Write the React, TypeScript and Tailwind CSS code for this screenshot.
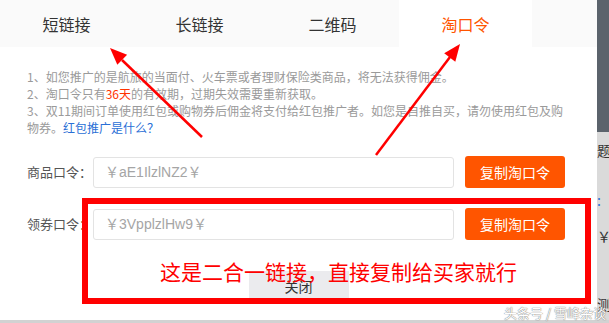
import React from 'react';

const tabs = ['短链接', '长链接', '二维码', '淘口令'];

function TokenRow({ label, value }: { label: string; value: string }) {
  return (
    <div className="flex items-center">
      <span className="w-[66px] text-[13px] text-[#555]">{label}</span>
      <div className="flex h-[31px] w-[361px] items-center rounded-[3px] border border-[#e3e3e3] bg-white pl-[11px] font-['Liberation_Sans','Noto_Sans_CJK_SC',sans-serif] text-[14px] text-[#a5a5a5]">
        {value}
      </div>
      <button
        type="button"
        className="ml-[11px] h-[32px] w-[100px] rounded-[3px] bg-[#ff5500] text-[14px] text-white"
      >
        复制淘口令
      </button>
    </div>
  );
}

export default function App() {
  return (
    <div className="relative h-[323px] w-[609px] overflow-hidden bg-white font-['Noto_Sans_CJK_SC',sans-serif]">
      <div className="flex h-[320px]">
        {/* 弹窗本体 */}
        <div className="flex w-[597px] flex-col">
          <div className="flex h-[47px] bg-[#fafafa]">
            {tabs.map((t, i) => (
              <div
                key={t}
                className={
                  i === 3
                    ? 'flex w-[133px] items-center justify-center bg-white text-[16px] text-[#ff5500]'
                    : 'flex w-[133px] items-center justify-center text-[16px] text-[#333]'
                }
              >
                {t}
              </div>
            ))}
          </div>

          <div className="mt-[21px] pl-[27px] text-[12px] leading-[17px] text-[#9a9a9a]">
            <p>1、如您推广的是航旅的当面付、火车票或者理财保险类商品，将无法获得佣金。</p>
            <p>
              2、淘口令只有<span className="text-[#ff3300]">36天</span>的有效期，过期失效需要重新获取。
            </p>
            <p>
              3、双11期间订单使用红包或购物券后佣金将支付给红包推广者。如您是自推自买，请勿使用红包及购
              <br />
              物券。<span className="text-[#2a6fd6]">红包推广是什么？</span>
            </p>
          </div>

          <div className="mt-[20px] flex flex-col gap-[20px] pl-[27px]">
            <TokenRow label="商品口令：" value="￥aE1IlzlNZ2￥" />
            <TokenRow label="领券口令：" value="￥3VpplzlHw9￥" />
          </div>

          <div className="mt-[31px] flex justify-center">
            <button type="button" className="h-[30px] w-[100px] bg-[#ebebee] text-[14px] text-[#333]">
              关闭
            </button>
          </div>
        </div>

        {/* 右侧背景露出部分 */}
        <div className="flex w-[12px] flex-col overflow-hidden">
          <div className="h-[132px] bg-[#5b636c]" />
          <div className="flex flex-1 flex-col bg-[#dadada] text-[14px] leading-none text-[#333]">
            <span className="mt-[11px]">题</span>
            <span className="mt-[36px] text-[#2a6fd6]">:</span>
            <span className="mt-[22px]">￥</span>
            <span className="mt-[54px]">测</span>
          </div>
        </div>
      </div>
      <div className="h-[3px] bg-[#d2d2d2]" />

      {/* 标注：红框 + 箭头 + 文字 */}
      <div className="pointer-events-none absolute left-[82px] top-[198px] h-[106px] w-[509px] border-[6px] border-[#ff0000]" />
      <div className="pointer-events-none absolute left-[160px] top-[258px] text-[21px] leading-[26px] text-[#ff0000]">
        这是二合一链接，直接复制给买家就行
      </div>
      <svg className="pointer-events-none absolute left-0 top-0" width="609" height="323">
        <line x1="202" y1="137" x2="122" y2="60" stroke="#ff0000" strokeWidth="2.5" />
        <polygon points="110,48 127.1,54.8 117.3,64.8" fill="#ff0000" />
        <line x1="376" y1="155" x2="450" y2="57" stroke="#ff0000" strokeWidth="2.5" />
        <polygon points="460,44 455.3,61.8 444.2,53.3" fill="#ff0000" />
      </svg>
      <div className="pointer-events-none absolute left-[504px] top-[305px] text-[13px] leading-[16px] text-white [text-shadow:0_0_1px_#777,0_0_1px_#777]">
        头条号 / 雪峰杂谈
      </div>
    </div>
  );
}
